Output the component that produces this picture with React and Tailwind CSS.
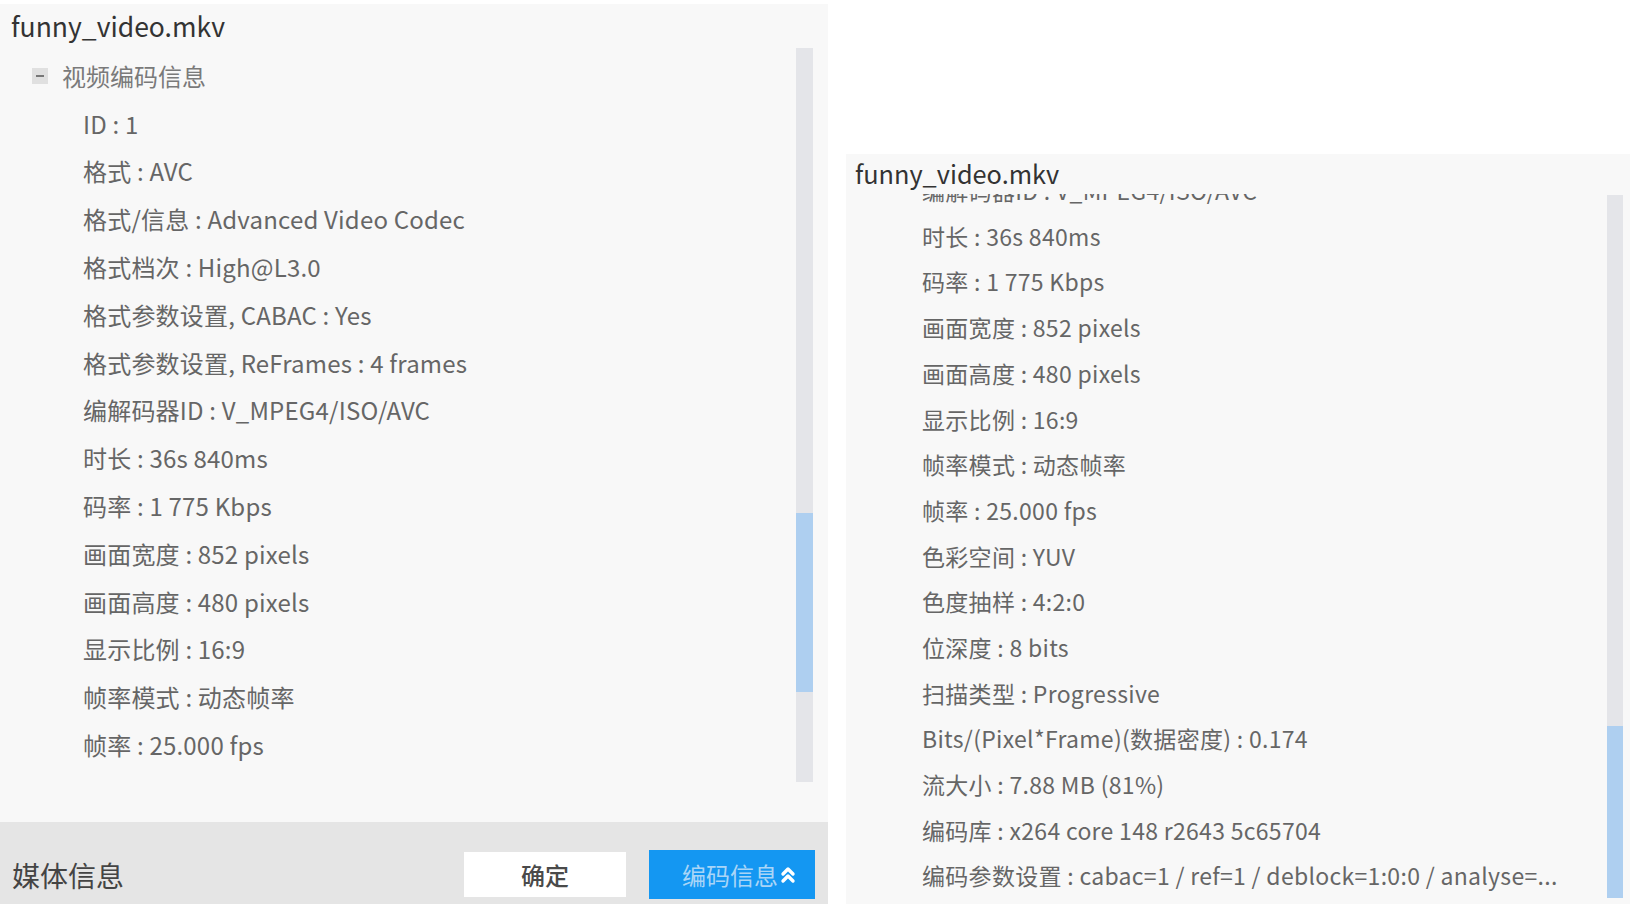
import { ChevronsUp } from 'lucide-react';

const font = { fontFamily: '"Noto Sans CJK SC", "Noto Sans", sans-serif' };

const leftRows = [
  'ID : 1',
  '格式 : AVC',
  '格式/信息 : Advanced Video Codec',
  '格式档次 : High@L3.0',
  '格式参数设置, CABAC : Yes',
  '格式参数设置, ReFrames : 4 frames',
  '编解码器ID : V_MPEG4/ISO/AVC',
  '时长 : 36s 840ms',
  '码率 : 1 775 Kbps',
  '画面宽度 : 852 pixels',
  '画面高度 : 480 pixels',
  '显示比例 : 16:9',
  '帧率模式 : 动态帧率',
  '帧率 : 25.000 fps',
  '色彩空间 : YUV',
];

const rightRows = [
  '编解码器ID : V_MPEG4/ISO/AVC',
  '时长 : 36s 840ms',
  '码率 : 1 775 Kbps',
  '画面宽度 : 852 pixels',
  '画面高度 : 480 pixels',
  '显示比例 : 16:9',
  '帧率模式 : 动态帧率',
  '帧率 : 25.000 fps',
  '色彩空间 : YUV',
  '色度抽样 : 4:2:0',
  '位深度 : 8 bits',
  '扫描类型 : Progressive',
  'Bits/(Pixel*Frame)(数据密度) : 0.174',
  '流大小 : 7.88 MB (81%)',
  '编码库 : x264 core 148 r2643 5c65704',
  '编码参数设置 : cabac=1 / ref=1 / deblock=1:0:0 / analyse=...',
];

function LeftPanel() {
  return (
    <div className="w-[828px] mt-[4px] h-[900px] bg-[#f8f8f8] flex flex-col">
      <div className="h-[44px] pl-[11px] flex items-center text-[26.5px] text-[#333]">
        funny_video.mkv
      </div>

      <div className="h-[734px] flex">
        <div className="flex-1 overflow-hidden pt-[4px]">
          {/* tree header */}
          <div className="h-[47.8px] flex items-center pl-[32px]">
            <span className="w-[16px] h-[16px] bg-[#e0e0e0] flex items-center justify-center">
              <span className="w-[8px] h-[2px] bg-[#777]" />
            </span>
            <span className="ml-[14px] text-[24px] text-[#7a7a7a]">视频编码信息</span>
          </div>
          {leftRows.map(r => (
            <div key={r} className="h-[47.8px] flex items-center pl-[83px] text-[24px] text-[#666] tracking-[0.2px] whitespace-nowrap">
              {r}
            </div>
          ))}
        </div>
        <div className="w-[17px] mr-[15px] bg-[#e4e5e9]">
          <div className="mt-[465px] h-[179px] bg-[#aecff0]" />
        </div>
      </div>

      <div className="h-[40px]" />

      <div className="flex-1 bg-[#e5e5e5] flex items-end pb-[5px]">
        <span className="pl-[12px] pb-[10px] text-[28px] text-[#444] leading-none">媒体信息</span>
        <div className="ml-auto flex items-end gap-[23px] pr-[13px]">
          <button className="w-[162px] h-[45px] mb-[2px] bg-white text-[24px] text-[#4a4a4a] font-medium">
            确定
          </button>
          <button className="w-[166px] h-[49px] bg-[#1497f2] flex items-center pl-[33px]">
            <span className="text-[24px] text-[#a9d5f7]">编码信息</span>
            <ChevronsUp size={24} strokeWidth={3.4} className="text-white -ml-[2px]" />
          </button>
        </div>
      </div>
    </div>
  );
}

function RightPanel() {
  return (
    <div className="ml-[18px] mt-[154px] w-[784px] h-[750px] bg-[#f8f8f8] flex flex-col">
      <div className="h-[40px] pl-[9px] flex items-center text-[25.3px] text-[#333] relative z-10">
        funny_video.mkv
      </div>
      <div className="flex-1 flex overflow-hidden">
        <div className="flex-1 overflow-hidden">
          <div className="-mt-[26.5px]">
            {rightRows.map(r => (
              <div key={r} className="h-[45.7px] flex items-center pl-[76px] text-[23px] text-[#666] tracking-[0.3px] whitespace-nowrap">
                {r}
              </div>
            ))}
          </div>
        </div>
        <div className="w-[16px] mr-[7px] mt-[1px] mb-[6px] bg-[#e4e5e9] flex flex-col">
          <div className="mt-auto h-[172px] bg-[#aecff0]" />
        </div>
      </div>
    </div>
  );
}

export default function App() {
  return (
    <div className="w-[1636px] h-[904px] bg-white flex items-start overflow-hidden" style={font}>
      <LeftPanel />
      <RightPanel />
    </div>
  );
}
